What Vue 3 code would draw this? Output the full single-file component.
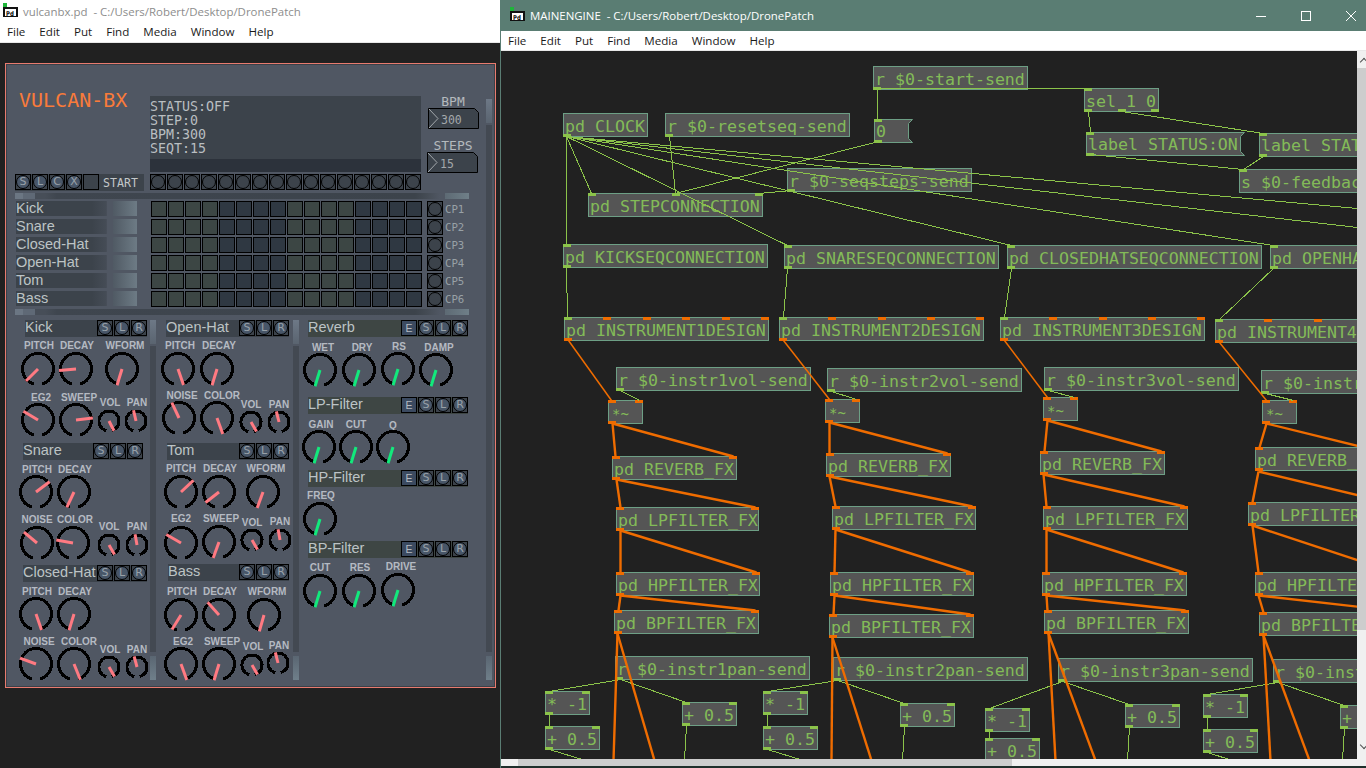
<script setup>
const menus = ['File', 'Edit', 'Put', 'Find', 'Media', 'Window', 'Help']

// ---------- left window: sequencer panel ----------
const statusLines = ['STATUS:OFF', 'STEP:0', 'BPM:300', 'SEQT:15']
const transport = ['S', 'L', 'C', 'X']
const instruments = ['Kick', 'Snare', 'Closed-Hat', 'Open-Hat', 'Tom', 'Bass']
const stepBangs = Array.from({ length: 16 }, (_, i) => i)

function stepClass(i) {
  return Math.floor(i / 4) % 2 === 0 ? 'olive' : 'navy'
}

const headers = [
  { x: 25, y: 320, w: 122, text: 'Kick' },
  { x: 23, y: 443, w: 120, text: 'Snare' },
  { x: 23, y: 565, w: 124, text: 'Closed-Hat' },
  { x: 166, y: 320, w: 123, text: 'Open-Hat' },
  { x: 167, y: 443, w: 122, text: 'Tom' },
  { x: 168, y: 564, w: 121, text: 'Bass' },
  { x: 308, y: 320, w: 160, text: 'Reverb', fx: true },
  { x: 308, y: 397, w: 160, text: 'LP-Filter', fx: true },
  { x: 308, y: 470, w: 160, text: 'HP-Filter', fx: true },
  { x: 308, y: 541, w: 160, text: 'BP-Filter', fx: true },
]

// label, label x, label y, knob x, knob y, needle angle, small
const K = (label, lx, ly, cx, cy, angle, small = false, fx = false) => ({ label, lx, ly, cx, cy, angle, small, fx })
const F = (label, lx, ly, cx, cy) => K(label, lx, ly, cx, cy, 197, false, true)
const knobs = [
  K('PITCH', 39, 345, 38, 369, 225),
  K('DECAY', 77, 345, 76, 369, 265),
  K('WFORM', 125, 345, 122, 369, 197),
  K('EG2', 41, 397, 38, 420, -59),
  K('SWEEP', 79, 397, 76, 420, 83),
  K('VOL', 110, 402, 109, 421, 153, true),
  K('PAN', 137, 402, 136, 421, -13, true),

  K('PITCH', 180, 345, 178, 369, 161),
  K('DECAY', 219, 345, 217, 369, 197),
  K('NOISE', 182, 395, 179, 418, -25),
  K('COLOR', 222, 395, 217, 418, 160),
  K('VOL', 251, 404, 251, 422, 150, true),
  K('PAN', 279, 404, 279, 422, -14, true),

  K('PITCH', 37, 469, 36, 492, 53),
  K('DECAY', 75, 469, 74, 492, 205),
  K('NOISE', 37, 519, 37, 543, -50),
  K('COLOR', 75, 519, 73, 543, 280),
  K('VOL', 109, 526, 109, 545, 150, true),
  K('PAN', 137, 526, 137, 545, -10, true),

  K('PITCH', 181, 468, 181, 492, 47),
  K('DECAY', 220, 468, 219, 492, 232),
  K('WFORM', 266, 468, 263, 492, 200),
  K('EG2', 181, 518, 181, 543, -60),
  K('SWEEP', 221, 518, 219, 542, 200),
  K('VOL', 252, 522, 252, 540, 150, true),
  K('PAN', 280, 521, 280, 540, -10, true),

  K('PITCH', 37, 591, 36, 614, 161),
  K('DECAY', 75, 591, 74, 614, 197),
  K('NOISE', 39, 641, 36, 664, -70),
  K('COLOR', 79, 641, 74, 664, 158),
  K('VOL', 110, 649, 109, 667, 150, true),
  K('PAN', 137, 649, 137, 667, -15, true),

  K('PITCH', 182, 591, 181, 615, 212),
  K('DECAY', 220, 591, 219, 615, -42),
  K('WFORM', 267, 591, 264, 615, 196),
  K('EG2', 183, 641, 181, 664, 160),
  K('SWEEP', 222, 641, 219, 664, 197),
  K('VOL', 253, 646, 252, 665, 150, true),
  K('PAN', 279, 645, 278, 663, -14, true),

  F('WET', 323, 347, 320, 370),
  F('DRY', 362, 347, 359, 370),
  F('RS', 399, 346, 398, 369),
  F('DAMP', 439, 347, 436, 370),
  F('GAIN', 321, 424, 319, 447),
  F('CUT', 356, 424, 356, 447),
  F('Q', 393, 425, 393, 447),
  F('FREQ', 321, 495, 320, 519),
  F('CUT', 320, 567, 320, 591),
  F('RES', 360, 567, 359, 591),
  F('DRIVE', 401, 566, 398, 590),
]

const polar = (r, deg) => {
  const a = (deg * Math.PI) / 180
  return [(r * Math.sin(a)).toFixed(2), (-r * Math.cos(a)).toFixed(2)]
}

function knobArc(k) {
  const r = k.small ? 10 : 15.5
  const [sx, sy] = polar(r, 195)
  const [ex, ey] = polar(r, 165)
  return `M${sx} ${sy}A${r} ${r} 0 1 1 ${ex} ${ey}`
}

function needleTip(k) {
  return polar(k.small ? 11 : 17, k.angle)
}

// ---------- right window: patch ----------
const PATCH_X = 501
const PATCH_Y = 51

const B = (x, y, w, text, ins = '', outs = '', msg = false) => ({ x, y, w, text, ins, outs, msg, h: 24 })
const nodes = [
  B(873, 66, 155, 'r $0-start-send', '', 'c'),
  B(563, 113, 85, 'pd CLOCK', '', 'c'),
  B(665, 113, 185, 'r $0-resetseq-send', '', 'c'),
  B(874, 119, 39, '0', 'c', 'c', true),
  B(787, 168, 185, 'r $0-seqsteps-send', '', 'c'),
  B(588, 193, 175, 'pd STEPCONNECTION', 'ccc', ''),
  B(1084, 88, 75, 'sel 1 0', 'c', 'ccc'),
  B(1086, 132, 159, 'label STATUS:ON', 'c', 'c', true),
  B(1259, 133, 160, 'label STATUS:OFF', 'c', 'c', true),
  B(1239, 169, 185, 's $0-feedback-send', 'c', ''),

  B(563, 244, 205, 'pd KICKSEQCONNECTION', 'c', 'c'),
  B(784, 245, 215, 'pd SNARESEQCONNECTION', 'c', 'c'),
  B(1007, 245, 255, 'pd CLOSEDHATSEQCONNECTION', 'c', 'c'),
  B(1270, 245, 235, 'pd OPENHATSEQCONNECTION', 'c', 'c'),

  B(564, 317, 205, 'pd INSTRUMENT1DESIGN', 'csssss', 's'),
  B(779, 317, 205, 'pd INSTRUMENT2DESIGN', 'cssss', 's'),
  B(1000, 317, 205, 'pd INSTRUMENT3DESIGN', 'cssss', 's'),
  B(1215, 319, 205, 'pd INSTRUMENT4DESIGN', 'cssss', 's'),

  B(616, 367, 195, 'r $0-instr1vol-send', '', 'c'),
  B(827, 368, 195, 'r $0-instr2vol-send', '', 'c'),
  B(1044, 367, 195, 'r $0-instr3vol-send', '', 'c'),
  B(1261, 370, 195, 'r $0-instr4vol-send', '', 'c'),

  B(608, 400, 35, '*~', 'ss', 's'),
  B(825, 399, 35, '*~', 'ss', 's'),
  B(1043, 397, 35, '*~', 'ss', 's'),
  B(1262, 400, 35, '*~', 'ss', 's'),

  B(612, 456, 125, 'pd REVERB_FX', 'ss', 's'),
  B(826, 453, 125, 'pd REVERB_FX', 'ss', 's'),
  B(1040, 451, 125, 'pd REVERB_FX', 'ss', 's'),
  B(1255, 447, 125, 'pd REVERB_FX', 'ss', 's'),

  B(616, 507, 143, 'pd LPFILTER_FX', 'ss', 's'),
  B(832, 506, 144, 'pd LPFILTER_FX', 'ss', 's'),
  B(1043, 506, 145, 'pd LPFILTER_FX', 'ss', 's'),
  B(1248, 502, 145, 'pd LPFILTER_FX', 'ss', 's'),

  B(616, 572, 144, 'pd HPFILTER_FX', 'ss', 's'),
  B(830, 572, 144, 'pd HPFILTER_FX', 'ss', 's'),
  B(1042, 572, 145, 'pd HPFILTER_FX', 'ss', 's'),
  B(1255, 572, 145, 'pd HPFILTER_FX', 'ss', 's'),

  B(614, 610, 145, 'pd BPFILTER_FX', 'ss', 's'),
  B(829, 614, 145, 'pd BPFILTER_FX', 'ss', 's'),
  B(1044, 610, 145, 'pd BPFILTER_FX', 'ss', 's'),
  B(1259, 612, 145, 'pd BPFILTER_FX', 'ss', 's'),

  B(615, 656, 195, 'r $0-instr1pan-send', '', 'c'),
  B(833, 657, 195, 'r $0-instr2pan-send', '', 'c'),
  B(1058, 658, 195, 'r $0-instr3pan-send', '', 'c'),
  B(1273, 659, 195, 'r $0-instr4pan-send', '', 'c'),

  B(545, 691, 45, '* -1', 'cc', 'c'),
  B(545, 726, 55, '+ 0.5', 'cc', 'c'),
  B(682, 702, 55, '+ 0.5', 'cc', 'c'),
  B(763, 691, 45, '* -1', 'cc', 'c'),
  B(763, 726, 55, '+ 0.5', 'cc', 'c'),
  B(900, 703, 55, '+ 0.5', 'cc', 'c'),
  B(985, 708, 45, '* -1', 'cc', 'c'),
  B(985, 738, 55, '+ 0.5', 'cc', 'c'),
  B(1125, 704, 55, '+ 0.5', 'cc', 'c'),
  B(1203, 694, 45, '* -1', 'cc', 'c'),
  B(1203, 729, 55, '+ 0.5', 'cc', 'c'),
  B(1340, 705, 55, '+ 0.5', 'cc', 'c'),
]

function ioLeft(i, count, w) {
  return count > 1 ? (i * (w - 8)) / (count - 1) : 0
}

function flagPoints(n) {
  const w = n.w - 0.5
  const h = n.h - 0.5
  return `0.5,0.5 ${w},0.5 ${w - 4},4.5 ${w - 4},${h - 4} ${w},${h} 0.5,${h}`
}

// control wires
const control = [
  [566, 136, 566, 244], [566, 136, 591, 193], [566, 136, 787, 245], [566, 136, 1011, 245],
  [566, 136, 1273, 245], [566, 136, 1357, 208], [566, 136, 1357, 227],
  [669, 136, 675, 193], [878, 141, 675, 193], [791, 190, 758, 193],
  [877, 89, 877, 119], [877, 88, 1087, 88],
  [1088, 111, 1090, 132], [1121, 111, 1263, 133], [1090, 154, 1243, 169], [1263, 156, 1243, 169],
  [566, 267, 567, 317], [787, 268, 783, 317], [1011, 268, 1004, 317], [1273, 268, 1219, 319],
  [620, 390, 639, 400], [831, 391, 856, 399], [1048, 390, 1074, 397], [1265, 393, 1293, 400],
  [620, 679, 549, 691], [620, 679, 686, 702], [837, 680, 767, 691], [837, 680, 904, 703],
  [1062, 681, 989, 708], [1062, 681, 1129, 704], [1277, 682, 1207, 694], [1277, 682, 1344, 705],
  [549, 714, 549, 726], [767, 714, 767, 726], [989, 731, 989, 738], [1207, 717, 1207, 729],
  [549, 749, 585, 760], [767, 749, 803, 760], [1207, 752, 1232, 760],
  [686, 725, 684, 760], [904, 726, 902, 760], [1129, 727, 1127, 760], [1344, 728, 1342, 760],
]

// signal wires
const signal = [
  [612, 423, 615, 456], [612, 423, 733, 456], [829, 422, 829, 453], [829, 422, 947, 453],
  [1047, 420, 1044, 451], [1047, 420, 1161, 451], [1266, 423, 1259, 447], [1266, 423, 1400, 456],
  [616, 479, 620, 507], [616, 479, 755, 507], [829, 476, 835, 506], [829, 476, 972, 506],
  [1043, 474, 1046, 506], [1043, 474, 1184, 506], [1258, 471, 1252, 502], [1258, 471, 1400, 505],
  [620, 530, 620, 572], [620, 530, 756, 572], [835, 529, 834, 572], [835, 529, 970, 572],
  [1046, 529, 1046, 572], [1046, 529, 1183, 572], [1252, 525, 1258, 572], [1252, 525, 1400, 574],
  [620, 595, 618, 610], [620, 595, 755, 610], [834, 595, 833, 614], [834, 595, 970, 614],
  [1046, 595, 1047, 610], [1046, 595, 1185, 610], [1258, 595, 1263, 612], [1258, 595, 1400, 611],
  [617, 633, 613, 760], [617, 633, 654, 760], [832, 637, 831, 760], [832, 637, 871, 760],
  [1048, 633, 1055, 760], [1048, 633, 1095, 760], [1263, 635, 1270, 760], [1263, 635, 1309, 760],
]

// instrument outlets into the vca, a bit thinner
const signalThin = [
  [568, 340, 611, 400], [783, 340, 829, 399], [1004, 340, 1047, 397], [1219, 342, 1266, 400],
]
</script>

<template>
  <div class="desktop">
    <!-- vulcanbx.pd window -->
    <section class="win win-left">
      <header class="title title-light">
        <svg class="pd-icon" width="16" height="15" viewBox="0 0 16 15">
          <rect x="0" y="0" width="4" height="4" fill="#1fb53a" />
          <rect x="0" y="4" width="15" height="10" fill="#111" />
          <rect x="2" y="6" width="11" height="7" fill="#fff" />
          <text x="3" y="12.5" class="pd-icon-text">Pd</text>
        </svg>
        <span>vulcanbx.pd&nbsp; - C:/Users/Robert/Desktop/DronePatch</span>
      </header>
      <nav class="menu">
        <span v-for="m in menus" :key="m">{{ m }}</span>
      </nav>
      <div class="canvas">
        <div class="panel">
          <div class="head">
            <div class="logo">VULCAN-BX</div>
            <div class="status">
              <div class="status-text">
                <div v-for="l in statusLines" :key="l">{{ l }}</div>
              </div>
              <div class="status-strip"></div>
            </div>
            <div class="side">
              <div class="side-label">BPM</div>
              <div class="num num-bpm">
                <svg width="51" height="21">
                  <polygon points="0.5,0.5 46.5,0.5 50.5,4.5 50.5,20.5 0.5,20.5" />
                  <polyline points="1,1 10,10.5 1,20" />
                </svg>
                <span>300</span>
              </div>
              <div class="side-label steps-label">STEPS</div>
              <div class="num">
                <svg width="51" height="21">
                  <polygon points="0.5,0.5 46.5,0.5 50.5,4.5 50.5,20.5 0.5,20.5" />
                  <polyline points="1,1 10,10.5 1,20" />
                </svg>
                <span>15</span>
              </div>
            </div>
          </div>

          <div class="transport">
            <div class="transport-left">
              <div v-for="t in transport" :key="t" class="bang"><span class="tint">{{ t }}</span></div>
              <div class="toggle"></div>
              <span class="start">START</span>
            </div>
            <div class="steps">
              <div v-for="i in stepBangs" :key="i" class="bang"><span></span></div>
            </div>
          </div>

          <div class="slider-h"></div>

          <div class="sequencer">
            <div v-for="(name, r) in instruments" :key="name" class="seq-row">
              <div class="seq-name">{{ name }}</div>
              <div class="steps">
                <div v-for="i in stepBangs" :key="i" class="cell" :class="stepClass(i)"></div>
              </div>
              <div class="bang cp"><span></span></div>
              <span class="cp-label">CP{{ r + 1 }}</span>
            </div>
          </div>

          <div class="slider-h"></div>

          <!-- knobs sit wherever the patch put them -->
          <div class="rack">
            <div class="slider-v" style="left: 144px; top: 256px; height: 360px"></div>
            <div class="slider-v" style="left: 287px; top: 256px; height: 360px"></div>
            <div class="slider-v" style="left: 480px; top: 35px; height: 581px"></div>

            <div
              v-for="h in headers"
              :key="h.text"
              class="rack-head"
              :class="{ 'rack-head-fx': h.fx }"
              :style="{ left: h.x - 6 + 'px', top: h.y - 64 + 'px', width: h.w + 'px' }"
            >
              <span class="rack-name">{{ h.text }}</span>
              <div v-if="h.fx" class="e-btn">E</div>
              <div class="bang"><span class="tint">S</span></div>
              <div class="bang"><span class="tint">L</span></div>
              <div class="bang"><span class="tint">R</span></div>
            </div>

            <template v-for="(k, i) in knobs" :key="i">
              <div class="knob-label" :style="{ left: k.lx - 6 + 'px', top: k.ly - 69 + 'px' }">{{ k.label }}</div>
              <svg
                class="knob"
                width="44"
                height="44"
                viewBox="-22 -22 44 44"
                :style="{ left: k.cx - 28 + 'px', top: k.cy - 86 + 'px' }"
              >
                <path class="knob-arc" :d="knobArc(k)" />
                <line
                  class="needle"
                  :class="{ 'needle-fx': k.fx }"
                  x1="0"
                  y1="0"
                  :x2="needleTip(k)[0]"
                  :y2="needleTip(k)[1]"
                />
              </svg>
            </template>
          </div>
        </div>
      </div>
    </section>

    <!-- MAINENGINE window -->
    <section class="win win-right">
      <header class="title title-teal">
        <svg class="pd-icon" width="16" height="15" viewBox="0 0 16 15">
          <rect x="0" y="0" width="4" height="4" fill="#1fb53a" />
          <rect x="0" y="4" width="15" height="10" fill="#111" />
          <rect x="2" y="6" width="11" height="7" fill="#fff" />
          <text x="3" y="12.5" class="pd-icon-text">Pd</text>
        </svg>
        <span class="title-text">MAINENGINE&nbsp; - C:/Users/Robert/Desktop/DronePatch</span>
        <div class="win-btns">
          <svg width="10" height="10" viewBox="0 0 10 10"><path d="M0 5.5H10" /></svg>
          <svg width="10" height="10" viewBox="0 0 10 10"><rect x="0.5" y="0.5" width="9" height="9" /></svg>
          <svg width="10" height="10" viewBox="0 0 10 10"><path d="M0 0L10 10M10 0L0 10" /></svg>
        </div>
      </header>
      <nav class="menu">
        <span v-for="m in menus" :key="m">{{ m }}</span>
      </nav>
      <div class="editor">
        <div class="patch">
          <div
            v-for="(n, i) in nodes"
            :key="i"
            class="box"
            :class="{ 'box-msg': n.msg, 'box-tilde': n.text === '*~' }"
            :style="{ left: n.x - PATCH_X + 'px', top: n.y - PATCH_Y + 'px', width: n.w + 'px', height: n.h + 'px' }"
          >
            <svg v-if="n.msg" class="flag" :width="n.w" :height="n.h">
              <polygon :points="flagPoints(n)" />
            </svg>
            <span class="box-text">{{ n.text }}</span>
            <i
              v-for="(c, j) in n.ins"
              :key="'i' + j"
              class="io io-top"
              :class="{ 'io-sig': c === 's' }"
              :style="{ left: ioLeft(j, n.ins.length, n.w) + 'px' }"
            ></i>
            <i
              v-for="(c, j) in n.outs"
              :key="'o' + j"
              class="io io-bottom"
              :class="{ 'io-sig': c === 's' }"
              :style="{ left: ioLeft(j, n.outs.length, n.w) + 'px' }"
            ></i>
          </div>
          <svg class="wires" width="856" height="708" viewBox="500.5 50.5 856 708">
            <line v-for="(w, i) in control" :key="'c' + i" class="wire" :x1="w[0]" :y1="w[1]" :x2="w[2]" :y2="w[3]" />
            <line v-for="(w, i) in signalThin" :key="'t' + i" class="wire-thin" :x1="w[0]" :y1="w[1]" :x2="w[2]" :y2="w[3]" />
            <line v-for="(w, i) in signal" :key="'s' + i" class="wire-sig" :x1="w[0]" :y1="w[1]" :x2="w[2]" :y2="w[3]" />
          </svg>
        </div>
        <div class="vscroll">
          <div class="arrow-up"></div>
          <div class="vthumb"></div>
          <div class="arrow-down"></div>
        </div>
      </div>
      <div class="hscroll">
        <div class="harrow"></div>
        <div class="hthumb"></div>
      </div>
      <div class="win-foot"></div>
    </section>
  </div>
</template>

<style scoped>
.desktop {
  position: relative;
  width: 1366px;
  height: 768px;
  overflow: hidden;
  background: #212121;
  font-family: "Open Sans", "Noto Sans", sans-serif;
}

.win {
  position: absolute;
  top: 0;
  height: 768px;
  display: flex;
  flex-direction: column;
}

.win-left {
  left: 0;
  width: 500px;
}

.win-right {
  left: 500px;
  width: 866px;
  border-left: 1px solid #5a7d73;
  box-sizing: border-box;
}

.title {
  display: flex;
  align-items: center;
  font-size: 11.45px;
  flex: none;
}

.title-light {
  height: 22px;
  padding-left: 3px;
  background: #fff;
  color: #8d8d8d;
}

.title-light span {
  margin: 1px 0 0 4px;
}

.title-teal {
  height: 31px;
  padding-left: 9px;
  background: #5a7d73;
  color: #fff;
}

.pd-icon {
  flex: none;
  margin-top: -2px;
}

.pd-icon-text {
  font-family: "DejaVu Sans Mono", monospace;
  font-size: 6.5px;
  font-weight: 700;
  fill: #000;
}

.title-text {
  margin-left: 4px;
}

.win-btns {
  margin-left: auto;
  display: flex;
  gap: 35px;
  padding-right: 10px;
}

.win-btns svg {
  fill: none;
  stroke: #fff;
  stroke-width: 1;
}

.menu {
  flex: none;
  height: 20px;
  box-sizing: content-box;
  display: flex;
  align-items: center;
  gap: 14px;
  padding: 0 0 0 7px;
  background: #fff;
  border-bottom: 1px solid #e8e8e8;
  font-size: 11.6px;
  line-height: 22px;
  color: #1a1a1a;
}

.win-right .menu {
  padding-left: 7px;
  height: 19px;
}

.canvas {
  flex: 1;
  position: relative;
  background: #212121;
}

/* sequencer panel */
.panel {
  position: absolute;
  left: 5px;
  top: 20px;
  width: 491px;
  height: 625px;
  box-sizing: border-box;
  padding: 32px 0 0 9px;
  border: 1px solid #e87b6f;
  box-shadow: inset 0 0 0 1px #3b4048;
  background: #505763;
  color: #b9bec1;
}

.head {
  display: flex;
  height: 76px;
  padding-left: 5px;
}

.logo {
  width: 130px;
  margin: -6px 0 0 0;
  font: 20px/20px "DejaVu Sans Mono", monospace;
  color: #f97b3a;
  position: relative;
  left: -1px;
}

.status {
  width: 271px;
  background: #3c434b;
  display: flex;
  flex-direction: column;
}

.status-text {
  flex: 1;
  padding-top: 4px;
  font: 13.3px/14px "DejaVu Sans Mono", monospace;
}

.status-strip {
  height: 13px;
  background: #2c323b;
}

.side {
  margin: -2px 0 0 6px;
  width: 52px;
}

.side-label {
  height: 14px;
  text-align: center;
  font: 13px/16px "DejaVu Sans Mono", monospace;
  color: #b4b9bd;
}

.steps-label {
  margin-top: 9px;
}

.num {
  position: relative;
  width: 51px;
  height: 21px;
}

.num-bpm {
  margin-left: 1px;
}

.num svg {
  display: block;
}

.num polygon {
  fill: #3c434b;
  stroke: #000;
}

.num polyline {
  fill: none;
  stroke: #a3a8ac;
}

.num span {
  position: absolute;
  left: 13px;
  top: 5px;
  font: 11.5px/15px "DejaVu Sans Mono", monospace;
  color: #a3a8ac;
}

.transport {
  margin-top: 2px;
  display: flex;
  gap: 6px;
}

.transport-left {
  width: 129px;
  height: 17px;
  display: flex;
  gap: 1px;
  background: #3c434b;
}

.toggle {
  width: 16px;
  height: 16px;
  box-sizing: border-box;
  border: 1px solid #000;
  background: #3c434b;
}

.start {
  margin-left: 3px;
  font: 11.6px/19px "DejaVu Sans Mono", monospace;
  color: #c3c7c9;
}

.bang {
  width: 16px;
  height: 16px;
  flex: none;
  box-sizing: border-box;
  border: 1px solid #000;
  background: #3c434b;
}

.bang span {
  display: block;
  width: 14px;
  height: 14px;
  box-sizing: border-box;
  border: 1px solid #000;
  border-radius: 50%;
  text-align: center;
  font: 11px/12px "DejaVu Sans", sans-serif;
  color: #98a1a8;
}

.bang .tint {
  background: #485668;
}

.steps {
  display: grid;
  grid-template-columns: repeat(16, 16px);
  gap: 1px;
}

.slider-h {
  margin-top: 2px;
  width: 454px;
  height: 6px;
  background: linear-gradient(
    to right,
    #6b7683 0,
    #6b7683 8px,
    #5f6976 8px,
    #5f6976 20px,
    #474e58 20px,
    #474e58 30px,
    #3f464f 42px,
    #3c434b 400px,
    #454c55 412px,
    #505763 425px,
    #505763 430px,
    #5d6a74 430px,
    #6f7f88 454px
  );
}

.sequencer {
  margin-top: 2px;
  display: flex;
  flex-direction: column;
  gap: 2px;
}

.seq-row {
  display: flex;
  height: 16px;
}

.seq-name {
  width: 121px;
  height: 15px;
  margin: 0 14px 0 1px;
  padding-left: 0;
  box-sizing: border-box;
  font: 14.5px/15px "Liberation Sans", sans-serif;
  color: #bcc3c5;
  background: linear-gradient(
    to right,
    #3c434b 0,
    #3c434b 76px,
    #454c56 90px,
    #4a505b 91px,
    #505763 91px,
    #505763 97px,
    #505a64 97px,
    #6d7b85 121px
  );
}

.cell {
  width: 16px;
  height: 16px;
  box-sizing: border-box;
  border: 1px solid #000;
}

.olive {
  background: #3c4644;
}

.navy {
  background: #2f3842;
}

.cp {
  margin-left: 5px;
}

.cp-label {
  margin-left: 2px;
  font: 10.7px/18px "DejaVu Sans Mono", monospace;
  color: #98a1a6;
}

.rack {
  position: absolute;
  left: 0;
  top: 0;
  width: 0;
  height: 0;
}

.rack-head {
  position: absolute;
  height: 17px;
  display: flex;
  gap: 1px;
  background: #3c434b;
}

.rack-head-fx {
  background: #3e4644;
}

.rack-name {
  flex: 1;
  min-width: 0;
  white-space: nowrap;
  font: 14.5px/15px "Liberation Sans", sans-serif;
  color: #bcc3c5;
}

.e-btn {
  width: 16px;
  height: 16px;
  box-sizing: border-box;
  border: 1px solid #000;
  background: #3b4a60;
  text-align: center;
  font: 10.5px/14px "Liberation Sans", sans-serif;
  color: #b4bac0;
}

.knob-label {
  position: absolute;
  transform: translateX(-50%);
  font: 700 10px/12px "Liberation Sans", sans-serif;
  color: #b5bac2;
  white-space: nowrap;
}

.knob {
  position: absolute;
}

.knob-arc {
  fill: none;
  stroke: #000;
  stroke-width: 3;
  shape-rendering: crispEdges;
}

.needle {
  stroke: #ff7a82;
  stroke-width: 3;
}

.needle-fx {
  stroke: #12e97c;
}

.slider-v {
  position: absolute;
  width: 6px;
  background: linear-gradient(
    to bottom,
    #6d7886 0,
    #5a6470 24px,
    #505763 24px,
    #505763 26px,
    #434952 26px,
    #434952 calc(100% - 28px),
    #505763 calc(100% - 28px),
    #505763 calc(100% - 24px),
    #5a6672 calc(100% - 24px),
    #6f7f8a 100%
  );
}

/* patch editor */
.editor {
  flex: none;
  height: 708px;
  display: flex;
}

.patch {
  position: relative;
  width: 856px;
  height: 708px;
  overflow: hidden;
  background: #212121;
}

.box {
  position: absolute;
  box-sizing: border-box;
  border: 1px solid #6d9f85;
  background: #555;
  padding-left: 1px;
  color: #83bb58;
  font: 16.6px/26px "DejaVu Sans Mono", monospace;
  white-space: pre;
}

.box-msg {
  border: none;
  background: none;
  padding-left: 2px;
}

.box-tilde .box-text {
  font-size: 14px;
  padding-left: 2px;
}

.box-text {
  position: relative;
}

.flag {
  position: absolute;
  left: 0;
  top: 0;
}

.flag polygon {
  fill: #555;
  stroke: #6d9f85;
}

.io {
  position: absolute;
  width: 8px;
  height: 3px;
  background: #8bc34a;
}

.box .io-top {
  top: -1px;
  margin-left: -1px;
}

.box .io-bottom {
  bottom: -1px;
  margin-left: -1px;
}

.box-msg .io {
  margin-left: 0;
}

.box-msg .io-top {
  top: 0;
}

.box-msg .io-bottom {
  bottom: 0;
}

.io-sig {
  background: #ef6c00;
}

.wires {
  position: absolute;
  left: 0;
  top: 0;
  pointer-events: none;
}

.wire {
  stroke: #8bc34a;
  stroke-width: 1;
  shape-rendering: crispEdges;
}

.wire-thin {
  stroke: #ef6c00;
  stroke-width: 1.5;
}

.wire-sig {
  stroke: #ef6c00;
  stroke-width: 2.4;
}

.vscroll {
  width: 9px;
  background: #f0f0f0;
  display: flex;
  flex-direction: column;
}

.arrow-up {
  height: 17px;
  background: #f0f0f0;
  position: relative;
}

.arrow-up::after {
  content: "";
  position: absolute;
  left: 4px;
  top: 8px;
  width: 5px;
  height: 5px;
  border-left: 1.5px solid #505050;
  border-top: 1.5px solid #505050;
  transform: rotate(45deg);
}

.vthumb {
  height: 562px;
  background: #cdcdcd;
}

.arrow-down {
  margin-top: auto;
  height: 17px;
  position: relative;
}

.arrow-down::after {
  content: "";
  position: absolute;
  left: 4px;
  top: 0;
  width: 5px;
  height: 5px;
  border-left: 1.5px solid #505050;
  border-bottom: 1.5px solid #505050;
  transform: rotate(-45deg);
}

.hscroll {
  flex: none;
  height: 7px;
  display: flex;
  background: #f0f0f0;
}

.harrow {
  width: 17px;
}

.hthumb {
  width: 494px;
  background: #cdcdcd;
}

.win-foot {
  flex: 1;
  background: #1f2f2b;
}
</style>

<style>
html,
body {
  margin: 0;
  background: #212121;
}
</style>
